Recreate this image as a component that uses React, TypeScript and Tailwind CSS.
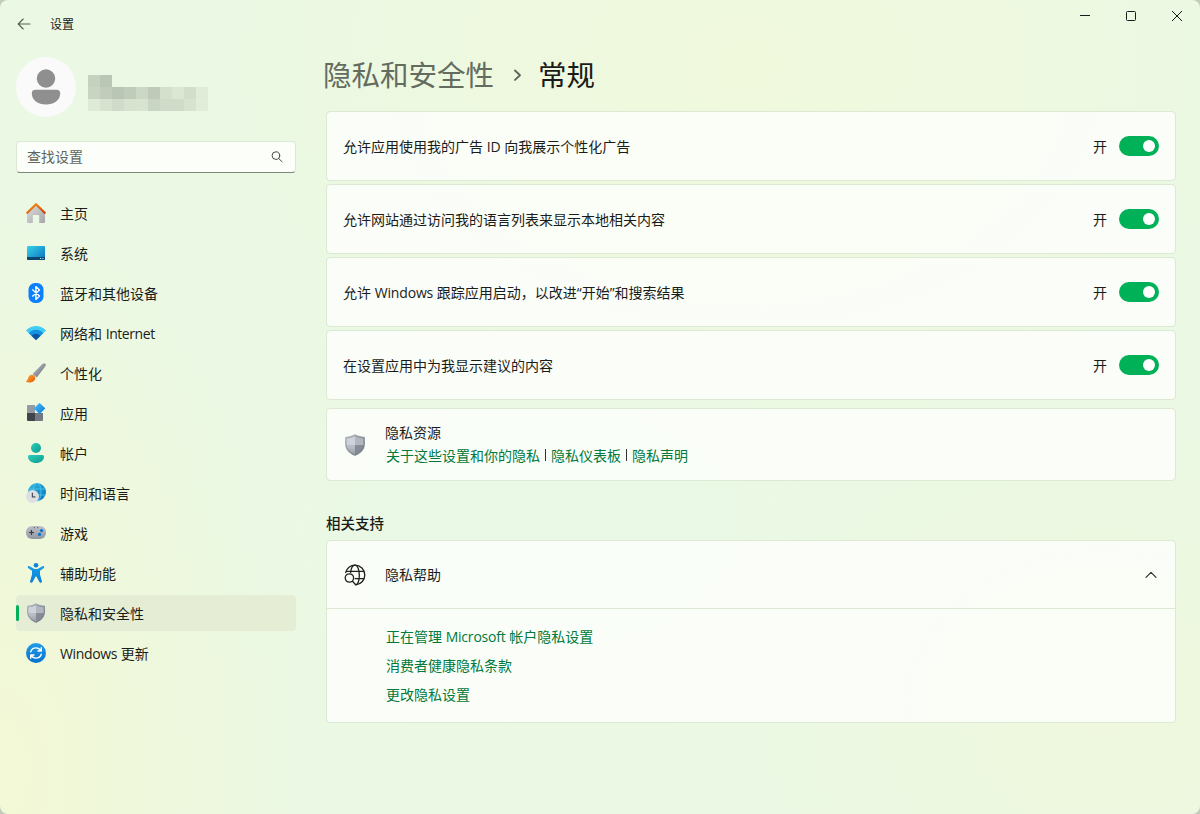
import type { ReactNode } from "react";

const Shield = ({ size }: { size: number }) => (
  <svg width={size} height={size} viewBox="0 0 20 20">
    <defs>
      <linearGradient id="shA" x1="0" y1="0" x2="1" y2="1">
        <stop offset="0" stopColor="#b4bac1" />
        <stop offset="1" stopColor="#6b7179" />
      </linearGradient>
      <linearGradient id="shB" x1="0" y1="0" x2="0" y2="1">
        <stop offset="0" stopColor="#bfc4cc" />
        <stop offset="1" stopColor="#9a9fa8" />
      </linearGradient>
    </defs>
    <path d="M10 .3c2.400 1.500 5.200 2.200 8.500 2.400.3 0 .5.200.5.500v5.400c0 5-3.100 8.900-8.700 11.200a.9.900 0 0 1-.6 0C4.100 17.500 1 13.600 1 8.600V3.200c0-.3.200-.5.500-.5C4.800 2.500 7.600 1.800 10 .3z" fill="url(#shA)" />
    <path d="M10 1.900v8.400H2.400V4.200c2.900-.1 5.400-.9 7.600-2.300z" fill="#ced2da" />
    <path d="M10 1.900v8.400h7.600V4.200c-2.900-.1-5.400-.9-7.600-2.300z" fill="#b1b6bf" />
    <path d="M10 10.300v8.100c-4.500-1.900-7.100-4.600-7.600-8.100z" fill="url(#shB)" />
    <path d="M10 10.300v8.100c4.500-1.900 7.100-4.600 7.600-8.100z" fill="#858b94" />
  </svg>
);

const Icon = ({ children }: { children: ReactNode }) => (
  <svg width="20" height="20" viewBox="0 0 20 20">{children}</svg>
);

const HomeIcon = () => (
  <Icon>
    <defs>
      <linearGradient id="hmA" x1="0" y1="0" x2="1" y2="1">
        <stop offset="0" stopColor="#dededf" />
        <stop offset="1" stopColor="#a5a5a8" />
      </linearGradient>
      <linearGradient id="hmB" x1="0" y1="0" x2="1" y2="1">
        <stop offset="0" stopColor="#f99a18" />
        <stop offset="1" stopColor="#c9400d" />
      </linearGradient>
    </defs>
    <path d="M10 2l9 8v9a1 1 0 0 1-1 1h-4.800v-7.300a.7.700 0 0 0-.7-.7h-5a.7.700 0 0 0-.7.700V20H2a1 1 0 0 1-1-1v-9z" fill="url(#hmA)" />
    <path d="M1.300 9.800L10 1.300l8.700 8.500" fill="none" stroke="url(#hmB)" strokeWidth="2.300" strokeLinecap="round" strokeLinejoin="round" />
  </Icon>
);

const SystemIcon = () => (
  <Icon>
    <defs>
      <linearGradient id="syA" x1="0" y1="0" x2="1" y2="1">
        <stop offset="0" stopColor="#36d4e6" />
        <stop offset="1" stopColor="#0a6fc2" />
      </linearGradient>
    </defs>
    <rect x="1" y="3" width="18" height="14" rx="1" fill="url(#syA)" />
    <path d="M1 14h18v2a1 1 0 0 1-1 1H2a1 1 0 0 1-1-1z" fill="#0c466f" />
    <path d="M14 15.500h1.200M16.300 15.500h1.200" stroke="#b8e6f5" strokeWidth="1" />
  </Icon>
);

const BluetoothIcon = () => (
  <Icon>
    <rect x="2.500" y="0" width="15" height="20" rx="6.500" fill="#0a80ff" />
    <path d="M6.300 6.600l7.200 6.500-3.600 3.300V3.600l3.600 3.300-7.200 6.500" fill="none" stroke="#fff" strokeWidth="1.400" strokeLinejoin="round" />
  </Icon>
);

const WifiIcon = () => (
  <Icon>
    <path d="M.5 6.900C5.800 1.700 14.200 1.700 19.500 6.900a.7.700 0 0 1 0 1L17.300 10.200H2.700L.5 7.900a.7.700 0 0 1 0-1z" fill="#40cdf5" />
    <path d="M2.700 10.200C6.800 5.700 13.200 5.700 17.300 10.200L14.500 13h-9z" fill="#1691e0" />
    <path d="M5.500 13C8.100 10.100 11.900 10.100 14.500 13L10.600 16.800a.9.900 0 0 1-1.200 0z" fill="#0757a5" />
  </Icon>
);

const BrushIcon = () => (
  <Icon>
    <defs>
      <linearGradient id="brA" x1="0" y1="0" x2="1" y2="1">
        <stop offset="0" stopColor="#b9bdc5" />
        <stop offset=".5" stopColor="#9297a0" />
        <stop offset="1" stopColor="#5d636c" />
      </linearGradient>
      <linearGradient id="brB" x1="0" y1="0" x2="1" y2="1">
        <stop offset="0" stopColor="#ffaa2c" />
        <stop offset="1" stopColor="#e4570c" />
      </linearGradient>
    </defs>
    <path d="M6.500 11L16.700.8c1.900-1.500 3.900.4 2.800 2.200L10.800 14.600z" fill="url(#brA)" />
    <path d="M2.700 13.800c1.500-2.500 4-2.400 5.500-1 1.600 1.500 1.500 4-.6 5.500-2 1.500-4.700 1.500-7.200.8-.5-.2-.5-.8 0-1.100 1.500-.9 1.300-2.500 2.300-4.200z" fill="url(#brB)" />
  </Icon>
);

const AppsIcon = () => (
  <Icon>
    <defs>
      <linearGradient id="apA" x1="0" y1="0" x2="1" y2="1">
        <stop offset="0" stopColor="#4bc0fb" />
        <stop offset="1" stopColor="#087ad7" />
      </linearGradient>
    </defs>
    <path d="M2 2h7v8H1V3a1 1 0 0 1 1-1z" fill="#959ba4" />
    <path d="M1 10h8v8H2a1 1 0 0 1-1-1z" fill="#40454c" />
    <path d="M9 10h8v7a1 1 0 0 1-1 1H9z" fill="#737983" />
    <path d="M12.800.4a1 1 0 0 1 1.400 0l4.500 4.300a1 1 0 0 1 0 1.400l-4.500 4.500a1 1 0 0 1-1.400 0L8.500 6.100a1 1 0 0 1 0-1.400z" fill="url(#apA)" />
  </Icon>
);

const AccountIcon = () => (
  <Icon>
    <defs>
      <linearGradient id="acA" x1="0" y1="0" x2="1" y2="1">
        <stop offset="0" stopColor="#28cdbb" />
        <stop offset="1" stopColor="#109d8f" />
      </linearGradient>
    </defs>
    <circle cx="10" cy="5" r="5" fill="url(#acA)" />
    <path d="M3.500 12h13A1.500 1.500 0 0 1 18 13.500c0 4-3.500 6.500-8 6.500s-8-2.500-8-6.500A1.500 1.500 0 0 1 3.500 12z" fill="url(#acA)" />
  </Icon>
);

const TimeIcon = () => (
  <Icon>
    <defs>
      <linearGradient id="tmA" x1="0" y1="0" x2="1" y2="1">
        <stop offset="0" stopColor="#34bde0" />
        <stop offset="1" stopColor="#0871bd" />
      </linearGradient>
    </defs>
    <circle cx="11" cy="9" r="9" fill="url(#tmA)" />
    <g fill="none" stroke="#57c9ea" strokeWidth=".8">
      <ellipse cx="11" cy="9" rx="4" ry="9" />
      <path d="M2.600 6h16.800M2.600 12h16.800" />
    </g>
    <circle cx="6.500" cy="13.500" r="6.500" fill="#dedfe3" />
    <path d="M6.400 9.700v4.100h3" fill="none" stroke="#4c5057" strokeWidth="1.200" />
  </Icon>
);

const GameIcon = () => (
  <Icon>
    <defs>
      <linearGradient id="gmA" x1="0" y1="0" x2="0" y2="1">
        <stop offset="0" stopColor="#bec1c8" />
        <stop offset="1" stopColor="#9197a0" />
      </linearGradient>
    </defs>
    <rect x="0" y="3" width="20" height="13" rx="6" fill="url(#gmA)" />
    <path d="M3 9.500h5M5.500 7v5" stroke="#383d44" strokeWidth="1.200" />
    <path d="M7.700 4.700h1.200M11 4.700h1.200" stroke="#555b64" strokeWidth="1" />
    <circle cx="15.500" cy="7.600" r="1.600" fill="#0873cf" />
    <circle cx="13.500" cy="11.400" r="1.600" fill="#0873cf" />
  </Icon>
);

const AccessIcon = () => (
  <Icon>
    <defs>
      <linearGradient id="axA" x1="0" y1="0" x2="0" y2="1">
        <stop offset="0" stopColor="#169de8" />
        <stop offset="1" stopColor="#0a7fd6" />
      </linearGradient>
    </defs>
    <circle cx="10" cy="2.300" r="2.300" fill="#0c82d8" />
    <path d="M3.500 3.200l4 2.200c1.600.8 3.400.8 5 0l4-2.200c1.400-.6 2.400 1.200 1.100 2.100L14 7.700v3.800l1.900 6.700c.3 1.600-1.800 2.300-2.500.9L10.400 13.500h-.8L6.600 19.100c-.7 1.400-2.800.7-2.500-.9L6 11.500V7.700L2.400 5.300C1.100 4.400 2.100 2.600 3.500 3.200z" fill="url(#axA)" />
  </Icon>
);

const UpdateIcon = () => (
  <Icon>
    <defs>
      <linearGradient id="upA" x1="0" y1="0" x2="0" y2="1">
        <stop offset="0" stopColor="#1e9cec" />
        <stop offset="1" stopColor="#0872cd" />
      </linearGradient>
    </defs>
    <circle cx="10" cy="10" r="10" fill="url(#upA)" />
    <g fill="none" stroke="#fff" strokeWidth="1.400" strokeLinecap="round" strokeLinejoin="round">
      <path d="M4.700 8.800C5.500 6.300 7.500 4.900 10 4.900c2.300 0 3.900 1.100 5 2.900M15.300 4.700v3.300h-3.300" />
      <path d="M15.300 11.200c-.8 2.500-2.800 3.900-5.300 3.900-2.300 0-3.900-1.100-5-2.900M4.700 15.300V12h3.300" />
    </g>
  </Icon>
);

const NAV: { label: ReactNode; icon: ReactNode; active?: boolean }[] = [
  { label: "主页", icon: <HomeIcon /> },
  { label: "系统", icon: <SystemIcon /> },
  { label: "蓝牙和其他设备", icon: <BluetoothIcon /> },
  { label: <>网络和 <span className="tracking-[-0.42px]">Internet</span></>, icon: <WifiIcon /> },
  { label: "个性化", icon: <BrushIcon /> },
  { label: "应用", icon: <AppsIcon /> },
  { label: "帐户", icon: <AccountIcon /> },
  { label: "时间和语言", icon: <TimeIcon /> },
  { label: "游戏", icon: <GameIcon /> },
  { label: "辅助功能", icon: <AccessIcon /> },
  { label: "隐私和安全性", icon: <Shield size={20} />, active: true },
  { label: <><span className="tracking-[-0.35px]">Windows</span> 更新</>, icon: <UpdateIcon /> },
];

const MOSAIC: string[][] = [
  ["bg-[#c6d1bf]", "bg-[#bbc7b5]"],
  ["bg-[#c9d4c2]", "bg-[#c1ccba]", "bg-[#bac6b5]", "bg-[#c0ccba]", "bg-[#ccd8c5]", "bg-[#bfcab9]", "bg-[#d4dfcc]", "bg-[#dbe6d3]", "bg-[#d2ddca]", "bg-[#e0ebd8]"],
  ["bg-[#dfead8]", "bg-[#d7e2cf]", "bg-[#d0dbc9]", "bg-[#d7e2cf]", "bg-[#d8e3d0]", "bg-[#cad6c4]", "bg-[#d0dcc9]", "bg-[#d0dbc8]", "bg-[#d8e3cf]", "bg-[#e1ecd9]"],
];

const TOGGLES: ReactNode[] = [
  "允许应用使用我的广告 ID 向我展示个性化广告",
  "允许网站通过访问我的语言列表来显示本地相关内容",
  <>允许 <span className="tracking-[-0.15px]">Windows</span> 跟踪应用启动，以改进“开始”和搜索结果</>,
  "在设置应用中为我显示建议的内容",
];

const card = "rounded border border-[#dce9d3] bg-white/75 bg-clip-padding";

export default function App() {
  return (
    <div className="h-[814px] w-[1200px] bg-[#c4cbbd]">
      <div className="flex h-full w-full flex-col overflow-hidden rounded-lg bg-[#ebf8e3] bg-[radial-gradient(ellipse_300px_560px_at_0%_95%,#f3f8d5_0%,transparent_100%),radial-gradient(ellipse_520px_380px_at_62%_8%,#f0f9dc_0%,transparent_100%),radial-gradient(ellipse_360px_300px_at_92%_88%,#eff8de_0%,transparent_100%),radial-gradient(ellipse_400px_240px_at_45%_65%,#e9f9e6_0%,transparent_100%)] font-['Open_Sans','Noto_Sans_CJK_SC',sans-serif] text-sm text-[#1a1c19]">
        <header className="flex h-12 shrink-0 items-start justify-between">
          <div className="flex h-12 items-center pl-[17px]">
            <svg width="14" height="14" viewBox="0 0 14 14" fill="none" stroke="#5b6058" strokeWidth="1.100" strokeLinecap="round" strokeLinejoin="round">
              <path d="M13 7H1.200M6.200 2L1.200 7l5 5" />
            </svg>
            <span className="ml-[19px] pt-0.5 text-xs">设置</span>
          </div>
          <div className="flex">
            <div className="flex h-8 w-[46px] items-center justify-center">
              <svg width="10" height="10" viewBox="0 0 10 10"><path d="M0 4.500h10" stroke="#1a1a1a" /></svg>
            </div>
            <div className="flex h-8 w-[46px] items-center justify-center">
              <svg width="10" height="10" viewBox="0 0 10 10"><rect x=".5" y=".5" width="9" height="9" rx="1" fill="none" stroke="#1a1a1a" /></svg>
            </div>
            <div className="flex h-8 w-[46px] items-center justify-center">
              <svg width="10" height="10" viewBox="0 0 10 10"><path d="M0 0l10 10M10 0L0 10" stroke="#1a1a1a" /></svg>
            </div>
          </div>
        </header>

        <div className="flex min-h-0 flex-1">
          <aside className="ml-4 w-[280px] shrink-0 pt-[9px]">
            <div className="flex h-[60px]">
              <svg width="60" height="60" viewBox="0 0 60 60">
                <circle cx="30" cy="30" r="30" fill="#fafafa" />
                <circle cx="30" cy="21.500" r="9.200" fill="#8f8f8f" />
                <path d="M19.500 32.800h21a3.700 3.700 0 0 1 3.700 3.700c0 6.500-6 11-14.200 11s-14.200-4.500-14.200-11a3.700 3.700 0 0 1 3.700-3.700z" fill="#8f8f8f" />
              </svg>
              <div className="ml-3 mt-[18px]">
                {MOSAIC.map((row, r) => (
                  <div key={r} className="flex">
                    {row.map((c, i) => <div key={i} className={"size-3 " + c} />)}
                  </div>
                ))}
              </div>
            </div>
            <div className="mt-6 flex h-8 items-center justify-between rounded border border-[#dbe8d2] border-b-[#7f877a] bg-white/80 bg-clip-padding pl-2.5 pr-3 text-[#60655d]">
              <span>查找设置</span>
              <svg width="12" height="12" viewBox="0 0 12 12" fill="none" stroke="#454943" strokeLinecap="round">
                <circle cx="4.900" cy="4.600" r="3.800" />
                <path d="M7.700 7.500l3.400 3.300" />
              </svg>
            </div>
            <nav className="mt-[22px] flex flex-col gap-1">
              {NAV.map((n, i) => (
                <div key={i} className={n.active ? "flex h-9 items-center rounded bg-[#e5eed5]" : "flex h-9 items-center"}>
                  <div className={n.active ? "h-4 w-[3px] rounded-full bg-[#00b158]" : "h-4 w-[3px]"} />
                  <div className="ml-[7px] size-5">{n.icon}</div>
                  <span className="ml-3.5 pt-0.5">{n.label}</span>
                </div>
              ))}
            </nav>
          </aside>

          <main className="ml-[30px] w-[850px]">
            <h1 className="-ml-[3px] flex h-[63px] items-center pb-2 text-[28.5px]">
              <span className="text-[#646b5f]">隐私和安全性</span>
              <svg className="ml-[19px] mr-4" width="9" height="13" viewBox="0 0 9 13" fill="none" stroke="#60665c" strokeWidth="1.900" strokeLinecap="round" strokeLinejoin="round">
                <path d="M2 1.500l5 4.700-5 4.700" />
              </svg>
              <span>常规</span>
            </h1>
            <div className="flex flex-col gap-[3px]">
              {TOGGLES.map((t, i) => (
                <div key={i} className={"flex h-[70px] items-center justify-between px-4 " + card}>
                  <span className="pt-0.5">{t}</span>
                  <div className="flex items-center gap-3">
                    <span className="pt-0.5">开</span>
                    <div className="flex h-5 w-10 items-center justify-end rounded-full bg-[#00b158] pr-1">
                      <div className="size-3 rounded-full bg-white" />
                    </div>
                  </div>
                </div>
              ))}
            </div>
            <div className={"mt-2 flex h-[73px] items-center pl-[17px] " + card}>
              <Shield size={22} />
              <div className="ml-[19px] pb-0.5">
                <div className="leading-[23px]">隐私资源</div>
                <div className="flex items-center pl-px leading-[23px] text-[#00793a]">
                  <span>关于这些设置和你的隐私</span>
                  <i className="mx-[5px] h-3 w-px bg-[#30332e]" />
                  <span>隐私仪表板</span>
                  <i className="mx-[5px] h-3 w-px bg-[#30332e]" />
                  <span>隐私声明</span>
                </div>
              </div>
            </div>
            <h2 className="mt-[33px] h-[26px] text-[14.500px] font-medium leading-5">相关支持</h2>
            <section className={"h-[183px] " + card}>
              <div className="flex h-[68px] items-center border-b border-[#dce9d3] pl-[17px] pr-[18px]">
                <svg width="22" height="22" viewBox="0 0 22 22" fill="none" stroke="#1f211e" strokeWidth="1.300" strokeLinecap="round">
                  <path d="M1.700 8.500C2.700 4.300 6.500 1.200 11 1.200c5.400 0 9.800 4.400 9.800 9.800 0 5-3.700 9.100-8.500 9.700" />
                  <path d="M6.700 8.500C7.100 4.300 8.800 1.200 11 1.200c2.400 0 4.300 4.400 4.300 9.800 0 4.700-1.300 8.600-3 9.700" />
                  <path d="M2.600 7.300h16.800M11.200 14.700h8.200" />
                  <circle cx="5.400" cy="14" r="4.200" />
                  <path d="M8.500 17.200l3.200 3.500" />
                </svg>
                <span className="ml-[19px]">隐私帮助</span>
                <svg className="ml-auto" width="12" height="8" viewBox="0 0 12 8" fill="none" stroke="#30332e" strokeWidth="1.200" strokeLinecap="round" strokeLinejoin="round">
                  <path d="M1 6.300l5-5 5 5" />
                </svg>
              </div>
              <div className="flex flex-col pl-[59px] pt-[13px] leading-[29px] text-[#00793a]">
                <span>正在管理 <span className="tracking-[-0.2px]">Microsoft</span> 帐户隐私设置</span>
                <span>消费者健康隐私条款</span>
                <span>更改隐私设置</span>
              </div>
            </section>
          </main>
        </div>
      </div>
    </div>
  );
}
